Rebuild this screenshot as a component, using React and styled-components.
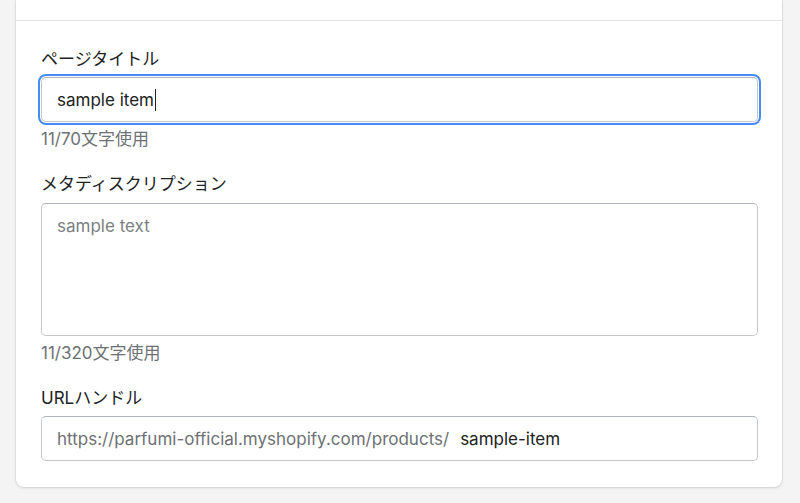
import React from "react";
import styled, { createGlobalStyle } from "styled-components";

const GlobalStyle = createGlobalStyle`
  html, body {
    margin: 0;
    padding: 0;
    background: #f4f4f5;
  }
  body {
    font-family: Inter, "Noto Sans CJK JP", sans-serif;
    color: #202223;
  }
`;

const Page = styled.div`
  width: 800px;
  height: 503px;
  box-sizing: border-box;
  padding: 0 18px 0 16px;
  overflow: hidden;
`;

const Card = styled.div`
  background: #fff;
  border-radius: 0 0 8px 8px;
  box-shadow: 0 0 0 1px rgba(63, 63, 68, 0.06), 0 1px 3px rgba(63, 63, 68, 0.16);
`;

const CutSection = styled.div`
  height: 20px;
  border-bottom: 1px solid #e1e3e5;
`;

const Section = styled.div`
  padding: 26px 24px 26px 25px;
  display: flex;
  flex-direction: column;
`;

const Field = styled.div`
  display: flex;
  flex-direction: column;
  & + & {
    margin-top: 21px;
  }
`;

const Label = styled.div`
  font-size: 17px;
  line-height: 24px;
  margin-bottom: ${(p) => (p.$gap ? p.$gap : 6)}px;
`;

const Box = styled.div`
  box-sizing: border-box;
  height: ${(p) => (p.$tall ? 133 : 45)}px;
  border: 1px solid #c4c7ca;
  border-top-color: #aeb4b9;
  border-radius: 5px;
  padding: ${(p) => (p.$tall ? "10px 15px" : "0 15px")};
  display: flex;
  align-items: ${(p) => (p.$tall ? "flex-start" : "center")};
  font-size: 17px;
  line-height: 24px;
  background: #fff;
  box-shadow: ${(p) =>
    p.$focused ? "0 0 0 1px #fff, 0 0 0 3px #458cf7" : "none"};
`;

const Value = styled.span`
  color: #202223;
`;

const Caret = styled.span`
  display: inline-block;
  width: 1px;
  height: 22px;
  background: #202223;
  margin-left: 1px;
`;

const Placeholder = styled.span`
  color: #7b7f83;
`;

const Prefix = styled.span`
  color: #6d7175;
  margin-right: 11px;
`;

const Help = styled.div`
  font-size: 17px;
  line-height: 24px;
  color: #6d7175;
  margin-top: 5px;
`;

export default function App() {
  return (
    <Page>
      <GlobalStyle />
      <Card>
        <CutSection />
        <Section>
          <Field>
            <Label>ページタイトル</Label>
            <Box $focused>
              <Value>sample item</Value>
              <Caret />
            </Box>
            <Help>11/70文字使用</Help>
          </Field>
          <Field>
            <Label $gap={7}>メタディスクリプション</Label>
            <Box $tall>
              <Placeholder>sample text</Placeholder>
            </Box>
            <Help>11/320文字使用</Help>
          </Field>
          <Field>
            <Label>URLハンドル</Label>
            <Box>
              <Prefix>https://parfumi-official.myshopify.com/products/</Prefix>
              <Value>sample-item</Value>
            </Box>
          </Field>
        </Section>
      </Card>
    </Page>
  );
}
